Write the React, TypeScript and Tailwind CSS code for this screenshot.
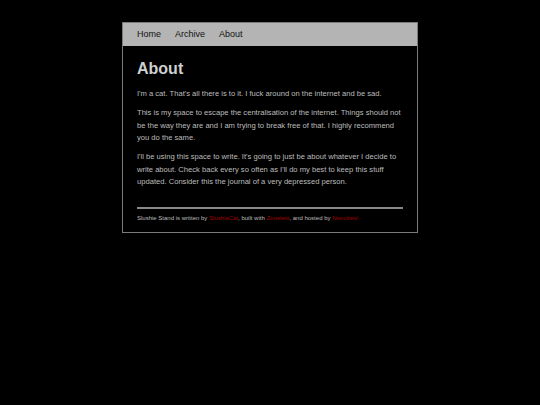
export default function App() {
  return (
    <div className="min-h-[405px] bg-black pt-[22px] font-['Liberation_Sans',Arial,sans-serif]">
      <div className="mx-auto w-[296px] border border-[#7a7a7a] bg-black">
        <nav className="flex h-[23px] items-center gap-[14px] bg-[#b4b4b4] px-[14px] text-[9px] text-[#111]">
          <a>Home</a>
          <a>Archive</a>
          <a>About</a>
        </nav>
        <main className="px-[14px] pb-[10px] pt-[14px]">
          <h1 className="text-[16px] font-bold leading-[18px] text-[#cfcfcf]">About</h1>
          <div className="mt-[10px] space-y-[6.5px] text-[7.6px] leading-[12.5px] text-[#bdbdbd]">
            <p>I'm a cat. That's all there is to it. I fuck around on the internet and be sad.</p>
            <p>
              This is my space to escape the centralisation of the internet. Things should not be the way they are
              and I am trying to break free of that. I highly recommend you do the same.
            </p>
            <p>
              I'll be using this space to write. It's going to just be about whatever I decide to write about. Check
              back every so often as I'll do my best to keep this stuff updated. Consider this the journal of a very
              depressed person.
            </p>
          </div>
          <hr className="mt-[18px] border-t-2 border-[#8a8a8a]" />
          <footer className="mt-[5px] text-[6px] leading-[8px] text-[#bdbdbd]">
            Slushie Stand is written by <a className="text-[#a00000]">SlushieCat</a>, built with{" "}
            <a className="text-[#a00000]">Zonelets</a>, and hosted by <a className="text-[#a00000]">Neocities!</a>
          </footer>
        </main>
      </div>
    </div>
  )
}
